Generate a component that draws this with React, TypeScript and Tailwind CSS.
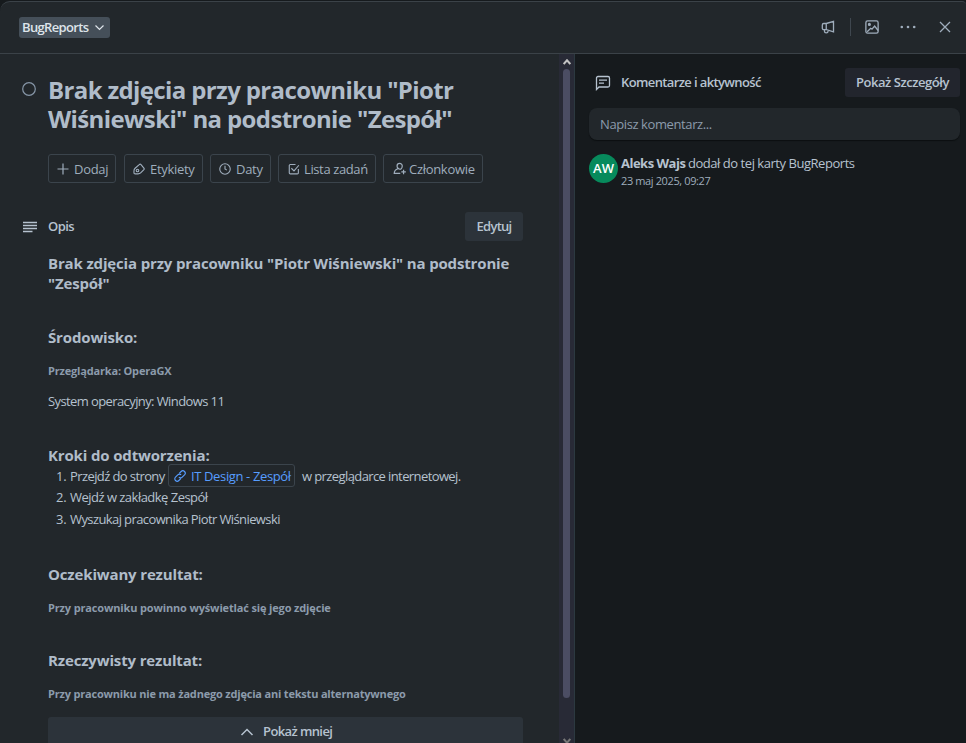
import React from 'react';

const stroke = { fill: 'none', stroke: 'currentColor', strokeWidth: 1.5 } as const;

function Icon({ size = 14, box = 16, className = '', children }: { size?: number; box?: number; className?: string; children: React.ReactNode }) {
  return (
    <svg width={size} height={size} viewBox={`0 0 ${box} ${box}`} className={`shrink-0 ${className}`} {...stroke}>
      {children}
    </svg>
  );
}

function ActionButton({ className, icon, label, text }: { className: string; icon: React.ReactNode; label: string; text: string }) {
  return (
    <button className={`flex h-[29px] shrink-0 items-center whitespace-nowrap rounded-[3px] border border-[#3b444c] text-[13px] font-medium text-[#9fadbc] ${className}`}>
      {icon}
      <span className={`pt-[3px] ${text}`}>{label}</span>
    </button>
  );
}

function Heading({ className, children }: { className: string; children: React.ReactNode }) {
  return <h3 className={`h-5 whitespace-nowrap text-[15px] leading-5 font-bold tracking-[-0.15px] text-[#b0bcc9] ${className}`}>{children}</h3>;
}

function Small({ className, children }: { className: string; children: React.ReactNode }) {
  return <h6 className={`h-5 whitespace-nowrap text-[11px] leading-5 font-bold text-[#8c9bab] ${className}`}>{children}</h6>;
}

export default function App() {
  return (
    <div className="h-[743px] w-[966px] overflow-hidden bg-[#161a1d] pt-px font-['Open_Sans','Noto_Sans',sans-serif] text-[13px] text-[#b6c2cf]">
      <div className="flex h-[743px] flex-col overflow-hidden rounded-tl-[10px] rounded-tr-[4px] border-t border-[#3b4248] bg-[#22272b]">
        <header className="flex h-[52px] shrink-0 items-center justify-between border-b border-[#3b4248] pl-[19px] pr-[14px]">
          <button className="flex h-[21px] w-[91px] items-center rounded-[3px] bg-[#454f59] pl-[3px] font-semibold text-[#dee4ea]">
            <span className="w-[68px] whitespace-nowrap text-left tracking-[-0.65px]">BugReports</span>
            <Icon size={9} box={9} className="ml-[5px]"><path d="M.5 2.500l4 4 4-4" strokeWidth="1.200" /></Icon>
          </button>
          <div className="mb-px flex items-center text-[#9fadbc]">
            <Icon size={14}>
              <path d="M6 4L14.300 1.500v12L6 11zM6 4H3.200A1.700 1.700 0 0 0 1.500 5.700v3.600A1.700 1.700 0 0 0 3.200 11H6zM4 11v2.200c0 2 4 2 4 0v-1.500" />
            </Icon>
            <span className="ml-[15px] h-[18px] w-px bg-[#3f474f]" />
            <Icon size={14} className="ml-[14px]">
              <rect x="1" y="1" width="14" height="14" rx="2" />
              <circle cx="5" cy="5" r="1" fill="currentColor" />
              <path d="M2.500 13.500l4-4 1.500 1 3-3.500 4 5" />
            </Icon>
            <Icon size={16} className="ml-[21px]">
              <g fill="currentColor" stroke="none"><circle cx="1.800" cy="8" r="1.300" /><circle cx="8" cy="8" r="1.300" /><circle cx="14.200" cy="8" r="1.300" /></g>
            </Icon>
            <Icon size={14} box={14} className="ml-[22px]"><path d="M2 2l10 10M12 2L2 12" strokeWidth="1.300" /></Icon>
          </div>
        </header>

        <div className="flex min-h-0 grow">
          <main className="h-full w-[559px] shrink-0 overflow-hidden pl-[22px] pt-[21px]">
            <div className="flex">
              <Icon size={14} className="mt-[7px] text-[#8696a7]"><circle cx="8" cy="8" r="7.200" strokeWidth="1.400" /></Icon>
              <h1 className="ml-3 w-[475px] text-[24px] leading-[29px] font-bold tracking-[-0.63px] text-[#b0bcc9]">
                Brak zdjęcia przy pracowniku "Piotr Wiśniewski" na podstronie "Zespół"
              </h1>
            </div>

            <div className="ml-[26px] mt-[21px] flex">
              <ActionButton className="w-[68px] pl-[8px]" text="ml-[5px] tracking-[-0.3px]" label="Dodaj" icon={<Icon size={12} box={12}><path d="M6 .5v11M.5 6h11" strokeWidth="1.200" /></Icon>} />
              <ActionButton className="ml-2 w-[79px] pl-[8px]" text="ml-[5px] tracking-[-0.3px]" label="Etykiety" icon={<Icon size={12}><path d="M8.300 2.200c.8-.8 1.600-.8 2.400 0l3.800 4.600c.6.8.6 1.400 0 2.100l-4.300 4.300c-1 1-2 1.300-3.500 1.300H3c-1 0-1.700-.6-1.700-1.600V10.500c0-1.500.4-2.500 1.500-3.500z" /><circle cx="6" cy="10" r="1.700" /></Icon>} />
              <ActionButton className="ml-[7px] w-[61px] pl-[8px]" text="ml-[5px] tracking-[-0.3px]" label="Daty" icon={<Icon size={12}><circle cx="8" cy="8" r="7" /><path d="M8 3.500V8l2.500 1.500" /></Icon>} />
              <ActionButton className="ml-[7px] w-[98px] pl-[9px]" text="ml-[4px] tracking-[-0.38px]" label="Lista zadań" icon={<Icon size={12}><path d="M10 2H3a1.300 1.300 0 0 0-1.300 1.300v10A1.300 1.300 0 0 0 3 14.500h9.500a1.300 1.300 0 0 0 1.300-1.300V8M4.500 7l3.500 3.500L14.500 3" /></Icon>} />
              <ActionButton className="ml-[7px] w-[100px] pl-[9px]" text="ml-[3px] tracking-[-0.3px]" label="Członkowie" icon={<Icon size={13}><path d="M9.500 9C6.500 8.500 5 6.700 5 4.800a3.200 3.200 0 0 1 6.400 0c0 1.900-.7 3.200-1.900 4.200M6 8.300c-3 1-4.500 2.700-4.500 5.700H9M13 9.500v5.500M10.200 12.200h5.600" /></Icon>} />
            </div>

            <div className="mt-[29px] flex h-[29px] w-[501px] items-center">
              <Icon size={14} box={14} className="ml-px"><path d="M0 2.500h14M0 5.500h14M0 8.500h14M0 11.500h9.500" strokeWidth="1.300" /></Icon>
              <h2 className="ml-[11px] font-semibold tracking-[-0.6px]">Opis</h2>
              <button className="ml-auto h-[29px] w-[58px] rounded-[3px] bg-[#2c333a] font-semibold tracking-[-0.75px]">Edytuj</button>
            </div>

            <div className="ml-[26px] mt-[12px]">
              <Heading className="">Brak zdjęcia przy pracowniku "Piotr Wiśniewski" na podstronie</Heading>
              <Heading className="">"Zespół"</Heading>
              <Heading className="mt-[34px]">Środowisko:</Heading>
              <Small className="mt-[14px] tracking-[-0.18px]">Przeglądarka: OperaGX</Small>
              <p className="mt-[10px] h-5 leading-5 tracking-[-0.6px]">System operacyjny: Windows 11</p>
              <Heading className="mt-[34px]">Kroki do odtworzenia:</Heading>
              <ol className="ml-2 whitespace-nowrap pt-px leading-[21px]">
                <li className="flex h-[21px] items-center">
                  <span className="w-[14px] tracking-[-0.3px]">1.</span>
                  <span className="w-[98px] tracking-[-0.6px]">Przejdź do strony</span>
                  <a className="relative -top-px flex h-[23px] w-[127px] shrink-0 items-center rounded-[3px] border border-[#3b444c] pl-[5px] text-[#579dff]">
                    <Icon size={12}><path d="M7 4.500L9.500 2a3.100 3.100 0 0 1 4.500 4.500l-3 3a3.100 3.100 0 0 1-4.500 0M9 11.500L6.500 14A3.100 3.100 0 0 1 2 9.500l3-3a3.100 3.100 0 0 1 4.500 0" /></Icon>
                    <span className="ml-[5px] pt-px tracking-[-0.37px]">IT Design - Zespół</span>
                  </a>
                  <span className="ml-[7px] tracking-[-0.6px]">w przeglądarce internetowej.</span>
                </li>
                <li className="flex h-[21px]"><span className="w-[14px] tracking-[-0.3px]">2.</span><span className="tracking-[-0.52px]">Wejdź w zakładkę Zespół</span></li>
                <li className="mt-px flex h-[21px]"><span className="w-[14px] tracking-[-0.3px]">3.</span><span className="tracking-[-0.6px]">Wyszukaj pracownika Piotr Wiśniewski</span></li>
              </ol>
              <Heading className="mt-[34px]">Oczekiwany rezultat:</Heading>
              <Small className="mt-[14px] tracking-[-0.15px]">Przy pracowniku powinno wyświetlać się jego zdjęcie</Small>
              <Heading className="mt-[32px]">Rzeczywisty rezultat:</Heading>
              <Small className="mt-[14px] tracking-[-0.19px]">Przy pracowniku nie ma żadnego zdjęcia ani tekstu alternatywnego</Small>
              <button className="mt-[13px] flex h-[29px] w-[475px] items-center rounded-[3px] bg-[#2c333a] pl-[192px] font-semibold">
                <Icon size={14} box={14}><path d="M1.500 10L7 4.500 12.500 10" strokeWidth="1.500" /></Icon>
                <span className="ml-[9px] tracking-[-0.6px]">Pokaż mniej</span>
              </button>
            </div>
          </main>

          <div className="flex w-4 shrink-0 flex-col items-center overflow-hidden border-r border-[#2c3940] bg-[#282a36]">
            <svg width="8" height="7" viewBox="0 0 8 7" className="mt-1 shrink-0"><path d="M.7 6L4 2.300 7.300 6" fill="none" stroke="#c3c3c3" strokeWidth="2" /></svg>
            <div className="mt-[4px] h-[629px] w-[7px] shrink-0 rounded-full bg-[#4b4d63]" />
            <svg width="8" height="7" viewBox="0 0 8 7" className="mt-[40px] shrink-0"><path d="M.7 1L4 4.700 7.300 1" fill="none" stroke="#777" strokeWidth="2" /></svg>
          </div>

          <aside className="h-full w-[391px] shrink-0 bg-[#161a1d] pl-[14px] pr-[6px] pt-[14px]">
            <div className="flex h-[29px] items-center">
              <Icon size={16} className="ml-[6px]"><path d="M1.500 14.500V3A1.500 1.500 0 0 1 3 1.500h10A1.500 1.500 0 0 1 14.500 3v7.500A1.500 1.500 0 0 1 13 12H4zM4 5.200h8M4 8.200h5" strokeWidth="1.300" /></Icon>
              <h2 className="ml-[10px] whitespace-nowrap font-semibold tracking-[-0.62px]">Komentarze i aktywność</h2>
              <button className="ml-auto h-[29px] w-[115px] whitespace-nowrap rounded-[3px] bg-[#22252d] font-semibold tracking-[-0.45px]">Pokaż Szczegóły</button>
            </div>
            <div className="mt-[11px] flex h-8 items-center rounded-lg bg-[#22272b] pl-[11px] text-[#8c9bab] shadow-[0_1px_1px_#0c0f11]">
              <span className="pt-0.5 tracking-[-0.4px]">Napisz komentarz...</span>
            </div>
            <div className="mt-[14px] flex">
              <div className="flex size-[29px] shrink-0 items-center justify-center rounded-full bg-[#078a5c] font-semibold text-white"><span>AW</span></div>
              <div className="ml-[3px] whitespace-nowrap">
                <p className="h-[18px] leading-[18px]"><b className="inline-block w-[67px] tracking-[-0.5px]">Aleks Wajs</b><span className="tracking-[-0.46px]">dodał do tej karty BugReports</span></p>
                <p className="h-[18px] text-[11px] leading-[18px] tracking-[-0.38px] text-[#9fadbc]">23 maj 2025, 09:27</p>
              </div>
            </div>
          </aside>
        </div>
      </div>
    </div>
  );
}
